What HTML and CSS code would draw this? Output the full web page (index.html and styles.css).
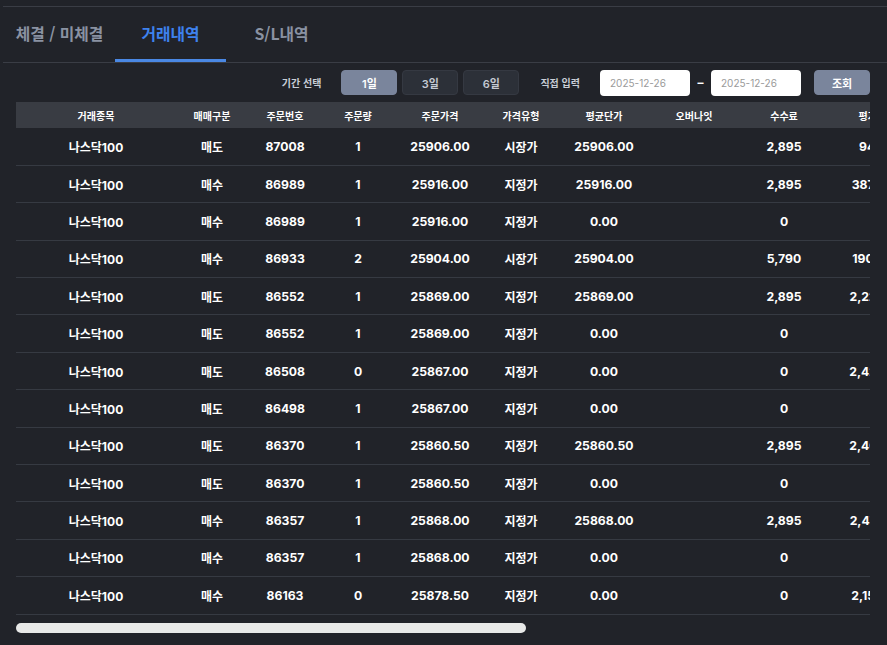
FILE: index.html
```html
<!DOCTYPE html>
<html lang="ko">
<head>
<meta charset="utf-8">
<title>거래내역</title>
<link rel="stylesheet" href="styles.css">
</head>
<body>
<div class="app">
  <nav class="tabs">
    <div class="tab">체결 / 미체결</div>
    <div class="tab active">거래내역</div>
    <div class="tab">S/L내역</div>
  </nav>
  <div class="filters">
    <span class="label">기간 선택</span>
    <div class="btn-group">
      <button class="btn on">1일</button>
      <button class="btn">3일</button>
      <button class="btn">6일</button>
    </div>
    <span class="label label-direct">직접 입력</span>
    <input class="date" type="text" value="2025-12-26">
    <span class="dash">–</span>
    <input class="date" type="text" value="2025-12-26">
    <button class="btn search">조회</button>
  </div>
  <div class="table-area">
    <div class="table-wrap">
      <table class="grid">
        <colgroup>
          <col style="width:160px"><col style="width:72px"><col style="width:74px"><col style="width:72px"><col style="width:92px"><col style="width:70px"><col style="width:96px"><col style="width:84px"><col style="width:96px"><col style="width:90px"><col style="width:100px"><col style="width:150px"><col style="width:150px"><col style="width:124px">
        </colgroup>
        <thead>
          <tr><th>거래종목</th><th>매매구분</th><th>주문번호</th><th>주문량</th><th>주문가격</th><th>가격유형</th><th>평균단가</th><th>오버나잇</th><th>수수료</th><th>평가손익</th><th>실현손익</th><th>주문시간</th><th>체결시간</th><th>상태</th></tr>
        </thead>
        <tbody>
          <tr><td class="ko">나스닥100</td><td class="ko">매도</td><td>87008</td><td>1</td><td>25906.00</td><td class="ko">시장가</td><td>25906.00</td><td></td><td>2,895</td><td>94.00</td><td>94.00</td><td>2025-12-26 14:02:11</td><td>2025-12-26 14:02:11</td><td class="ko">체결</td></tr>
          <tr><td class="ko">나스닥100</td><td class="ko">매수</td><td>86989</td><td>1</td><td>25916.00</td><td class="ko">지정가</td><td>25916.00</td><td></td><td>2,895</td><td>3870.00</td><td>3870.00</td><td>2025-12-26 13:55:40</td><td>2025-12-26 13:55:40</td><td class="ko">체결</td></tr>
          <tr><td class="ko">나스닥100</td><td class="ko">매수</td><td>86989</td><td>1</td><td>25916.00</td><td class="ko">지정가</td><td>0.00</td><td></td><td>0</td><td></td><td></td><td>2025-12-26 13:54:02</td><td></td><td class="ko">접수</td></tr>
          <tr><td class="ko">나스닥100</td><td class="ko">매수</td><td>86933</td><td>2</td><td>25904.00</td><td class="ko">시장가</td><td>25904.00</td><td></td><td>5,790</td><td>1900.00</td><td>1900.00</td><td>2025-12-26 13:41:27</td><td>2025-12-26 13:41:27</td><td class="ko">체결</td></tr>
          <tr><td class="ko">나스닥100</td><td class="ko">매도</td><td>86552</td><td>1</td><td>25869.00</td><td class="ko">지정가</td><td>25869.00</td><td></td><td>2,895</td><td>2,225.00</td><td>2,225.00</td><td>2025-12-26 11:20:15</td><td>2025-12-26 11:20:15</td><td class="ko">체결</td></tr>
          <tr><td class="ko">나스닥100</td><td class="ko">매도</td><td>86552</td><td>1</td><td>25869.00</td><td class="ko">지정가</td><td>0.00</td><td></td><td>0</td><td></td><td></td><td>2025-12-26 11:18:50</td><td></td><td class="ko">접수</td></tr>
          <tr><td class="ko">나스닥100</td><td class="ko">매도</td><td>86508</td><td>0</td><td>25867.00</td><td class="ko">지정가</td><td>0.00</td><td></td><td>0</td><td>2,425.00</td><td>2,425.00</td><td>2025-12-26 11:02:33</td><td></td><td class="ko">취소</td></tr>
          <tr><td class="ko">나스닥100</td><td class="ko">매도</td><td>86498</td><td>1</td><td>25867.00</td><td class="ko">지정가</td><td>0.00</td><td></td><td>0</td><td></td><td></td><td>2025-12-26 10:58:09</td><td></td><td class="ko">접수</td></tr>
          <tr><td class="ko">나스닥100</td><td class="ko">매도</td><td>86370</td><td>1</td><td>25860.50</td><td class="ko">지정가</td><td>25860.50</td><td></td><td>2,895</td><td>2,465.00</td><td>2,465.00</td><td>2025-12-26 10:21:44</td><td>2025-12-26 10:21:44</td><td class="ko">체결</td></tr>
          <tr><td class="ko">나스닥100</td><td class="ko">매도</td><td>86370</td><td>1</td><td>25860.50</td><td class="ko">지정가</td><td>0.00</td><td></td><td>0</td><td></td><td></td><td>2025-12-26 10:20:12</td><td></td><td class="ko">접수</td></tr>
          <tr><td class="ko">나스닥100</td><td class="ko">매수</td><td>86357</td><td>1</td><td>25868.00</td><td class="ko">지정가</td><td>25868.00</td><td></td><td>2,895</td><td>2,475.00</td><td>2,475.00</td><td>2025-12-26 10:15:03</td><td>2025-12-26 10:15:03</td><td class="ko">체결</td></tr>
          <tr><td class="ko">나스닥100</td><td class="ko">매수</td><td>86357</td><td>1</td><td>25868.00</td><td class="ko">지정가</td><td>0.00</td><td></td><td>0</td><td></td><td></td><td>2025-12-26 10:14:37</td><td></td><td class="ko">접수</td></tr>
          <tr><td class="ko">나스닥100</td><td class="ko">매수</td><td>86163</td><td>0</td><td>25878.50</td><td class="ko">지정가</td><td>0.00</td><td></td><td>0</td><td>2,155.00</td><td>2,155.00</td><td>2025-12-26 09:40:21</td><td></td><td class="ko">취소</td></tr>
        </tbody>
      </table>
    </div>
    <div class="hscroll"><div class="hscroll-thumb"></div></div>
  </div>
</div>
</body>
</html>
```
FILE: styles.css
```css
* { box-sizing: border-box; }
html, body {
  margin: 0;
  padding: 0;
  background: #212329;
  height: 100%;
  overflow: hidden;
}
body {
  font-family: "Inter", "Noto Sans CJK KR", sans-serif;
  color: #ffffff;
}
.app {
  margin: 6px 0 0 3px;
  border-top: 1px solid #3a3d45;
}
.tabs {
  display: flex;
  height: 56px;
  padding-left: 1px;
  border-bottom: 1px solid #3a3d45;
}
.tab {
  width: 111px;
  display: flex;
  align-items: center;
  justify-content: center;
  padding-top: 1px;
  font-family: "Noto Sans CJK KR", sans-serif;
  font-size: 15.8px;
  font-weight: 700;
  color: #8a92a2;
  border-bottom: 3px solid transparent;
}
.tab.active {
  color: #3e82ee;
  border-bottom-color: #4a88e4;
}
.filters {
  height: 39px;
  display: flex;
  align-items: center;
  justify-content: flex-end;
  padding-right: 17px;
}
.label {
  font-family: "Noto Sans CJK KR", sans-serif;
  font-size: 10px;
  font-weight: 700;
  color: #c9ced7;
  margin-right: 20px;
}
.label-direct { margin-left: 21px; }
.btn-group {
  display: flex;
  gap: 5px;
}
.btn {
  width: 56px;
  height: 25px;
  border-radius: 4px;
  border: 1px solid #353942;
  background: #2c3038;
  color: #c5cad3;
  font-family: "Inter", "Noto Sans CJK KR", sans-serif;
  font-size: 11px;
  font-weight: 600;
  padding: 0;
}
.btn.on {
  background: #7a859c;
  border-color: #7a859c;
  color: #ffffff;
}
.btn.search {
  background: #7a859c;
  border-color: #7a859c;
  color: #ffffff;
  margin-left: 13px;
}
.date {
  width: 90px;
  height: 26px;
  border: none;
  border-radius: 4px;
  background: #ffffff;
  color: #9a9a9a;
  font-family: "Inter", sans-serif;
  font-size: 10px;
  padding: 0 0 0 10px;
  outline: none;
}
.dash {
  width: 21px;
  text-align: center;
  font-size: 12px;
  font-weight: 700;
  color: #ffffff;
}
.table-area {
  margin: 0 17px 0 13px;
}
.table-wrap {
  overflow: hidden;
}
.grid {
  table-layout: fixed;
  width: 1430px;
  border-collapse: collapse;
  border-spacing: 0;
}
.grid th {
  height: 26px;
  background: #393c43;
  font-family: "Noto Sans CJK KR", sans-serif;
  font-size: 10px;
  font-weight: 700;
  color: #ffffff;
  text-align: center;
  padding: 0;
  white-space: nowrap;
}
.grid td {
  height: 37.4px;
  border-bottom: 1px solid #363a42;
  font-size: 12.2px;
  font-weight: 700;
  text-align: center;
  padding: 0;
  white-space: nowrap;
}
.grid td.ko { font-size: 12px; }
.hscroll {
  margin-top: 8px;
  height: 10px;
}
.hscroll-thumb {
  width: 510px;
  height: 10px;
  border-radius: 5px;
  background: #e8e9e8;
}
```
